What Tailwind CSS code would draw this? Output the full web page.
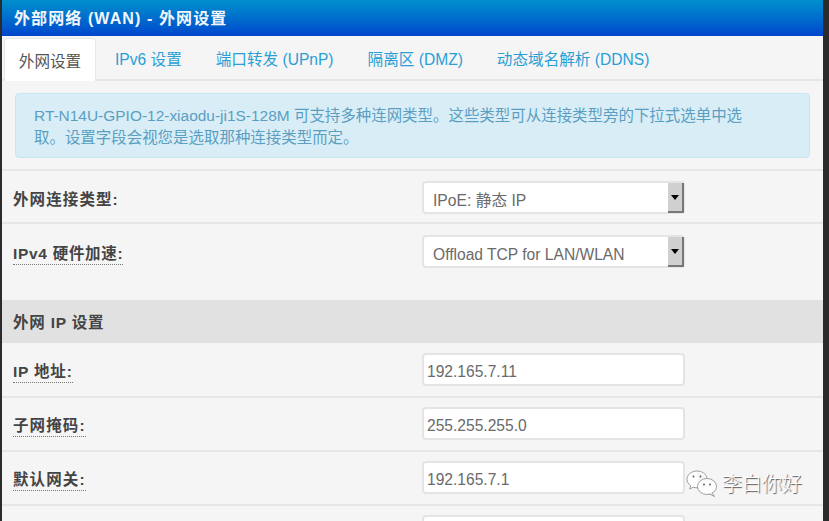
<!DOCTYPE html>
<html lang="zh-CN">
<head>
  <meta charset="UTF-8" />
  <title>外部网络 (WAN) - 外网设置</title>
  <script src="https://cdn.jsdelivr.net/npm/@tailwindcss/browser@4"></script>
</head>
<body class="h-[521px] w-[829px] overflow-hidden bg-[#2b2b2b] font-['Liberation_Sans','Noto_Sans_CJK_SC',sans-serif] text-[#555]">
  <div class="relative ml-[2px] h-[521px] w-[821px] overflow-hidden bg-[#f5f5f5]">

    <!-- Header -->
    <div class="flex h-[36px] items-center bg-gradient-to-b from-[#0090cc] to-[#0044cc] pl-[12px] pt-[2px] text-[16px] font-bold tracking-[1.1px] text-[#f2f6fb]">外部网络 (WAN) - 外网设置</div>

    <!-- Tabs -->
    <div class="flex h-[45px] items-end gap-[3px] border-b-2 border-[#e6e6e6] pl-[2px] pt-[2px] text-[15.6px] text-[#2a9fd6]">
      <div class="mb-[-2px] flex h-[43px] w-[92px] items-center justify-center rounded-t-[4px] border border-b-0 border-[#e8e8e8] bg-white pt-[3px] text-[#555]">外网设置</div>
      <div class="flex h-[41px] items-center px-[16px] pt-[3px]">IPv6 设置</div>
      <div class="flex h-[41px] items-center px-[15px] pt-[3px]">端口转发 (UPnP)</div>
      <div class="flex h-[41px] items-center px-[16px] pt-[3px]">隔离区 (DMZ)</div>
      <div class="flex h-[41px] items-center px-[15px] pt-[3px]">动态域名解析 (DDNS)</div>
    </div>

    <!-- Notice -->
    <div class="mx-[13px] mt-[12px] h-[65px] rounded-[4px] border border-[#c5e6f2] bg-[#d9edf7] px-[18px] pt-[11px] text-[15.46px] leading-[22px] text-[#5a9fc2]">
      RT-N14U-GPIO-12-xiaodu-ji1S-128M 可支持多种连网类型。这些类型可从连接类型旁的下拉式选单中选<br />取。设置字段会视您是选取那种连接类型而定。
    </div>

    <div class="mt-[11px] border-t-2 border-[#e6e6e6]">
      <!-- Connection type -->
      <div class="flex h-[53px] items-start border-b-2 border-[#e6e6e6] pl-[11px] pt-[10px]">
        <div class="w-[409px] pt-[7px] text-[15.5px] font-bold tracking-[1.1px] text-[#444]">外网连接类型:</div>
        <div class="relative flex h-[33px] w-[263px] items-center rounded-[4px] border-2 border-[#e4e4e4] bg-white pl-[9px] pt-[6px] text-[15.7px] text-[#6a6a6a]">
          IPoE: 静态 IP
          <div class="absolute right-[-1px] top-0 flex h-[30px] w-[16px] items-center justify-center border-b-2 border-r-2 border-[#777] bg-[#d0d0d0]">
            <div class="h-0 w-0 border-x-[4px] border-t-[5px] border-x-transparent border-t-black"></div>
          </div>
        </div>
      </div>

      <!-- Hardware acceleration -->
      <div class="flex h-[76px] pl-[11px] pt-[11px]">
        <div class="w-[409px] pt-[7px] text-[15.5px] font-bold tracking-[0.7px] text-[#444]"><span class="border-b border-dotted border-[#777] pb-[2px]">IPv4 硬件加速:</span></div>
        <div class="relative flex h-[33px] w-[263px] items-center rounded-[4px] border-2 border-[#e4e4e4] bg-white pl-[9px] pt-[6px] text-[15.6px] text-[#6a6a6a]">
          Offload TCP for LAN/WLAN
          <div class="absolute right-[-1px] top-0 flex h-[30px] w-[16px] items-center justify-center border-b-2 border-r-2 border-[#777] bg-[#d0d0d0]">
            <div class="h-0 w-0 border-x-[4px] border-t-[5px] border-x-transparent border-t-black"></div>
          </div>
        </div>
      </div>

      <!-- Section -->
      <div class="flex h-[43px] items-center bg-[#e1e1e1] pl-[11px] pt-[3px] text-[15.5px] font-bold tracking-[0.8px] text-[#444]">外网 IP 设置</div>

      <!-- IP rows -->
      <div class="flex h-[55px] items-start border-b-2 border-[#e6e6e6] pl-[11px] pt-[10px]">
        <div class="w-[409px] pt-[7px] text-[15.5px] font-bold tracking-[0.8px] text-[#444]"><span class="border-b border-dotted border-[#777] pb-[2px]">IP 地址:</span></div>
        <div class="flex h-[33px] w-[263px] items-center rounded-[4px] border-2 border-[#e4e4e4] bg-white pl-[3px] pt-[5px] text-[15.6px] text-[#6a6a6a]">192.165.7.11</div>
      </div>
      <div class="flex h-[54px] items-start border-b-2 border-[#e6e6e6] pl-[11px] pt-[9px]">
        <div class="w-[409px] pt-[7px] text-[15.5px] font-bold tracking-[1.1px] text-[#444]"><span class="border-b border-dotted border-[#777] pb-[2px]">子网掩码:</span></div>
        <div class="flex h-[33px] w-[263px] items-center rounded-[4px] border-2 border-[#e4e4e4] bg-white pl-[3px] pt-[5px] text-[15.6px] text-[#6a6a6a]">255.255.255.0</div>
      </div>
      <div class="flex h-[54px] items-start border-b-2 border-[#e6e6e6] pl-[11px] pt-[9px]">
        <div class="w-[409px] pt-[7px] text-[15.5px] font-bold tracking-[1.1px] text-[#444]"><span class="border-b border-dotted border-[#777] pb-[2px]">默认网关:</span></div>
        <div class="flex h-[33px] w-[263px] items-center rounded-[4px] border-2 border-[#e4e4e4] bg-white pl-[3px] pt-[5px] text-[15.6px] text-[#6a6a6a]">192.165.7.1</div>
      </div>
      <div class="flex h-[54px] items-start pl-[420px] pt-[9px]">
        <div class="h-[33px] w-[263px] rounded-[4px] border-2 border-[#e4e4e4] bg-white"></div>
      </div>
    </div>

    <!-- Watermark -->
    <div class="absolute left-[684px] top-[469px] flex items-center gap-[4px]">
      <svg width="32" height="28" viewBox="0 0 32 28" fill="#fff" stroke="#777" stroke-width="0.7">
        <path d="M11 1C5.5 1 1 4.7 1 9.3c0 2.6 1.4 4.8 3.6 6.3L3.8 19l3.4-1.8c1.2.4 2.4.6 3.8.6.5 0 .9 0 1.3-.1" />
        <path d="M11 1c5 0 9.2 3 9.9 7" />
        <ellipse cx="21" cy="16.5" rx="9.5" ry="8" />
        <path d="M26 23l2.5 3.5-5-2.5" />
        <circle cx="7.5" cy="6.5" r="0.9" fill="#555" stroke="none" />
        <circle cx="14.5" cy="6.5" r="0.9" fill="#555" stroke="none" />
        <circle cx="18" cy="14.5" r="0.9" fill="#555" stroke="none" />
        <circle cx="24" cy="14.5" r="0.9" fill="#555" stroke="none" />
      </svg>
      <span class="text-[20px] font-light text-white [text-shadow:1px_1px_1px_#555]">李白你好</span>
    </div>
  </div>
</body>
</html>
